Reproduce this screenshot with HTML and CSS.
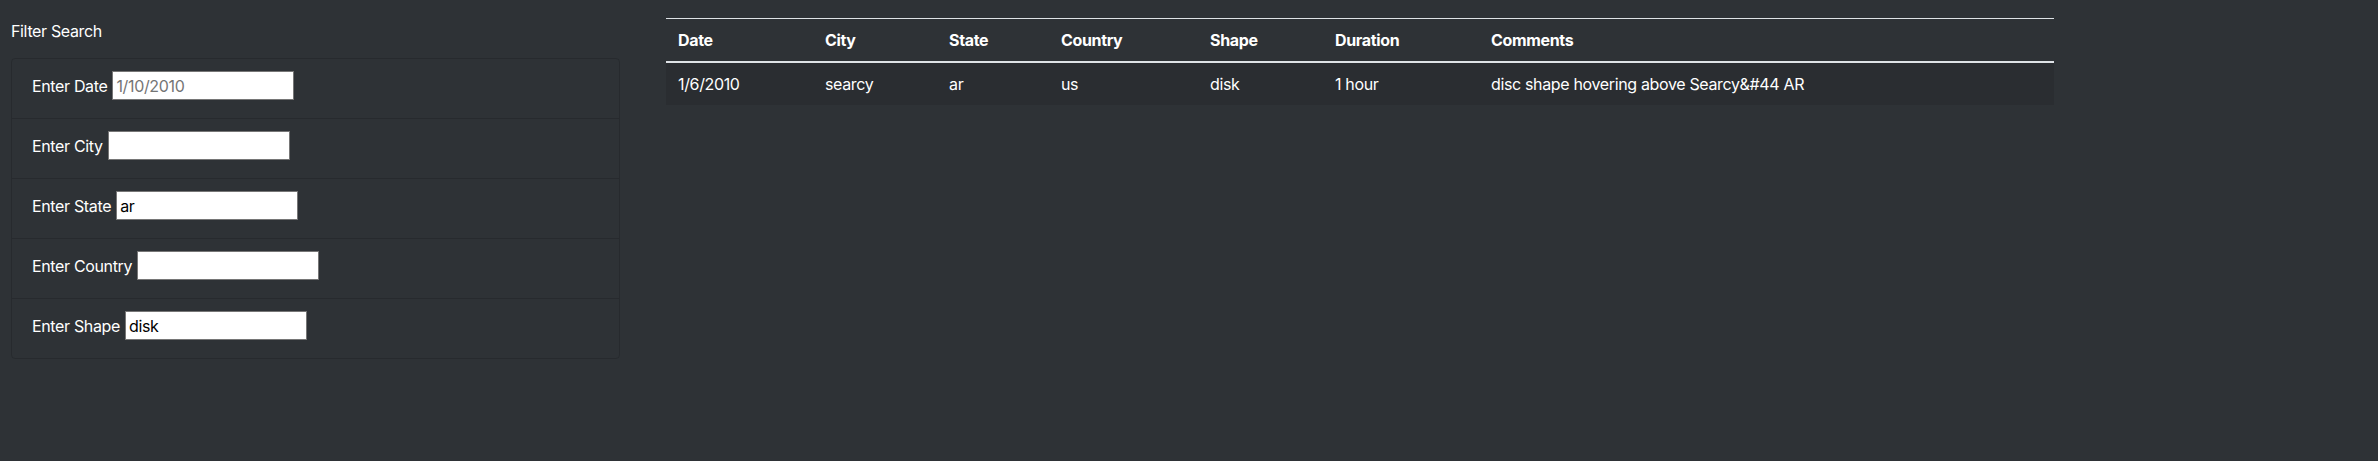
FILE: index.html
```html
<!DOCTYPE html>
<html lang="en">
<head>
<meta charset="utf-8">
<title>UFO Sightings</title>
<link rel="stylesheet" href="styles.css">
</head>
<body>
<div class="page">
  <aside class="sidebar">
    <div class="filter-title">Filter Search</div>
    <ul class="filters">
      <li class="filter-row"><label class="filter-label" for="datetime">Enter Date</label><input class="filter-input" id="datetime" type="text" placeholder="1/10/2010"></li>
      <li class="filter-row"><label class="filter-label" for="city">Enter City</label><input class="filter-input" id="city" type="text"></li>
      <li class="filter-row"><label class="filter-label" for="state">Enter State</label><input class="filter-input" id="state" type="text" value="ar"></li>
      <li class="filter-row"><label class="filter-label" for="country">Enter Country</label><input class="filter-input" id="country" type="text"></li>
      <li class="filter-row"><label class="filter-label" for="shape">Enter Shape</label><input class="filter-input" id="shape" type="text" value="disk"></li>
    </ul>
  </aside>
  <main class="results">
    <table class="ufo-table">
      <colgroup>
        <col class="c-date"><col class="c-city"><col class="c-state"><col class="c-country"><col class="c-shape"><col class="c-duration"><col class="c-comments">
      </colgroup>
      <thead>
        <tr><th>Date</th><th>City</th><th>State</th><th>Country</th><th>Shape</th><th>Duration</th><th>Comments</th></tr>
      </thead>
      <tbody>
        <tr><td>1/6/2010</td><td>searcy</td><td>ar</td><td>us</td><td>disk</td><td>1 hour</td><td>disc shape hovering above Searcy&amp;#44 AR</td></tr>
      </tbody>
    </table>
  </main>
</div>
</body>
</html>
```

FILE: styles.css
```css
* { box-sizing: border-box; }

html, body {
  margin: 0;
  padding: 0;
  background: #2e3236;
  color: #ffffff;
  font-family: Inter, "Liberation Sans", Arial, sans-serif;
  font-size: 16px;
  letter-spacing: -0.35px;
}

.page {
  display: flex;
  align-items: flex-start;
  padding: 0 0 0 11px;
  min-height: 461px;
}

.sidebar {
  width: 609px;
  flex: none;
  padding-top: 19px;
}

.filter-title {
  line-height: 24px;
  height: 24px;
}

.filters {
  list-style: none;
  margin: 15px 0 0 0;
  padding: 0;
  border: 1px solid rgba(0, 0, 0, 0.14);
  border-radius: 4px;
}

.filter-row {
  display: flex;
  align-items: baseline;
  gap: 5px;
  height: 59px;
  padding: 12px 20px;
}

.filter-row + .filter-row {
  border-top: 1px solid rgba(0, 0, 0, 0.14);
  height: 60px;
}

.filter-label {
  line-height: 29px;
}

.filter-input {
  width: 182px;
  height: 29px;
  padding: 0 3px;
  border: 1px solid #767676;
  background: #ffffff;
  color: #000000;
  font-family: inherit;
  font-size: 16px;
  letter-spacing: -0.35px;
  border-radius: 0;
  outline: none;
}

.filter-input::placeholder {
  color: #757575;
}

.results {
  margin-left: 46px;
  padding-top: 18px;
}

.ufo-table {
  width: 1388px;
  border-collapse: collapse;
  table-layout: fixed;
  border-top: 1px solid #dee2e6;
}

.c-date { width: 147px; }
.c-city { width: 124px; }
.c-state { width: 112px; }
.c-country { width: 149px; }
.c-shape { width: 125px; }
.c-duration { width: 156px; }
.c-comments { width: 575px; }

.ufo-table th,
.ufo-table td {
  text-align: left;
  padding: 12px;
  line-height: 18px;
  white-space: nowrap;
}

.ufo-table th {
  font-weight: 700;
  border-bottom: 2px solid #dee2e6;
}

.ufo-table tbody tr {
  background: #2a2d31;
}
```
